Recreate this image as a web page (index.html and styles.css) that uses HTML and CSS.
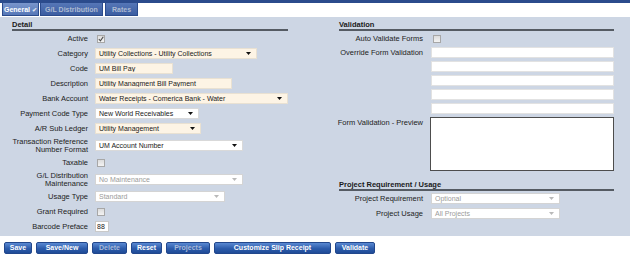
FILE: index.html
```html
<!DOCTYPE html>
<html lang="en">
<head>
    <meta charset="UTF-8">
    <meta name="viewport" content="width=device-width, initial-scale=1.0">
    <title>Payment Code</title>
    <link rel="stylesheet" href="styles.css">
</head>
<body>
    <div class="tabs">
        <a class="tab tab-general active" href="#">General <span class="tick">&#10004;</span></a>
        <a class="tab tab-gl" href="#">G/L Distribution</a>
        <a class="tab tab-rates" href="#">Rates</a>
    </div>

    <div class="panel">
        <section class="col col-left">
            <h2>Detail</h2>
            <div class="row">
                <label>Active</label>
                <span class="cb"><svg width="6" height="6" viewBox="0 0 6 6"><path d="M0.8 3 L2.4 4.8 L5.3 0.8" fill="none" stroke="#4a4a4a" stroke-width="1.1"/></svg></span>
            </div>
            <div class="row">
                <label>Category</label>
                <div class="select cream f-category"><span>Utility Collections - Utility Collections</span><i class="arrow"></i></div>
            </div>
            <div class="row">
                <label>Code</label>
                <input class="input cream f-code" value="UM Bill Pay">
            </div>
            <div class="row">
                <label>Description</label>
                <input class="input cream f-desc" value="Utility Managment Bill Payment">
            </div>
            <div class="row">
                <label>Bank Account</label>
                <div class="select cream f-bank"><span>Water Receipts - Comerica Bank - Water</span><i class="arrow"></i></div>
            </div>
            <div class="row">
                <label>Payment Code Type</label>
                <div class="select f-type"><span>New World Receivables</span><i class="arrow"></i></div>
            </div>
            <div class="row">
                <label>A/R Sub Ledger</label>
                <div class="select cream f-ledger"><span>Utility Management</span><i class="arrow"></i></div>
            </div>
            <div class="row tall">
                <label>Transaction Reference Number Format</label>
                <div class="select f-wide"><span>UM Account Number</span><i class="arrow"></i></div>
            </div>
            <div class="row">
                <label>Taxable</label>
                <span class="cb"></span>
            </div>
            <div class="row tall">
                <label>G/L Distribution Maintenance</label>
                <div class="select disabled f-wide"><span>No Maintenance</span><i class="arrow"></i></div>
            </div>
            <div class="row">
                <label>Usage Type</label>
                <div class="select disabled f-usage"><span>Standard</span><i class="arrow"></i></div>
            </div>
            <div class="row">
                <label>Grant Required</label>
                <span class="cb"></span>
            </div>
            <div class="row">
                <label>Barcode Preface</label>
                <input class="input f-barcode" value="88">
            </div>
        </section>

        <section class="col col-right">
            <h2>Validation</h2>
            <div class="row">
                <label>Auto Validate Forms</label>
                <span class="cb"></span>
            </div>
            <div class="row top override">
                <label>Override Form Validation</label>
                <div class="stack">
                    <input class="input f-long">
                    <input class="input f-long">
                    <input class="input f-long">
                    <input class="input f-long">
                    <input class="input f-long">
                </div>
            </div>
            <div class="row top preview">
                <label>Form Validation - Preview</label>
                <textarea class="preview-box"></textarea>
            </div>

            <h2 class="sub">Project Requirement / Usage</h2>
            <div class="row">
                <label>Project Requirement</label>
                <div class="select disabled f-project"><span>Optional</span><i class="arrow"></i></div>
            </div>
            <div class="row">
                <label>Project Usage</label>
                <div class="select disabled f-project"><span>All Projects</span><i class="arrow"></i></div>
            </div>
        </section>
    </div>

    <div class="buttons">
        <button class="btn b-save">Save</button>
        <button class="btn b-savenew">Save/New</button>
        <button class="btn b-delete off">Delete</button>
        <button class="btn b-reset">Reset</button>
        <button class="btn b-projects off">Projects</button>
        <button class="btn b-slip">Customize Slip Receipt</button>
        <button class="btn b-validate">Validate</button>
    </div>
</body>
</html>
```

FILE: styles.css
```css
body {
    margin: 0;
    font-family: "Liberation Sans", Arial, sans-serif;
    background: #ffffff;
    color: #1e1e1e;
}

/* tabs */
.tabs {
    display: flex;
    height: 14px;
    padding-left: 2px;
    border-top: 3px solid #2b4b8c;
}
.tab {
    box-sizing: border-box;
    height: 13px;
    line-height: 13px;
    margin-right: 1px;
    text-align: center;
    font-size: 7px;
    font-weight: bold;
    color: #aebbd2;
    text-decoration: none;
    background: linear-gradient(#5677b7, #3b5da1);
    border: 1px solid #2b4b8c;
    border-top: 0;
}
.tab.active {
    color: #ffffff;
    background: linear-gradient(#7995cc, #5677b7);
}
.tab .tick {
    font-size: 6px;
    color: #dfe6f3;
}
.tab-general { width: 37px; }
.tab-gl { width: 63px; }
.tab-rates { width: 33px; margin-left: 1px; }

/* main panel */
.panel {
    display: grid;
    grid-template-columns: 278px 277px;
    column-gap: 49px;
    height: 219px;
    padding: 0 16px 0 10px;
    background: #cdd6e4;
}
h2 {
    margin: 0 0 0 2px;
    padding-top: 3px;
    line-height: 9px;
    font-size: 7.5px;
    font-weight: bold;
    color: #1a1a1a;
    border-bottom: 2px solid #555b63;
}
h2.sub {
    margin-top: 6px;
}

.row {
    display: grid;
    align-items: center;
    height: 15px;
}
.col-left .row {
    grid-template-columns: 78px 1fr;
    column-gap: 7px;
}
.col-right .row {
    grid-template-columns: 86px 1fr;
    column-gap: 8px;
}
.row.tall {
    height: 19px;
}
.row.top {
    align-items: start;
    height: auto;
}
.row label {
    justify-self: end;
    text-align: right;
    font-size: 7.5px;
    line-height: 8px;
    color: #222222;
    white-space: nowrap;
}
.row.tall label {
    white-space: normal;
}
.row.top label {
    line-height: 11px;
}
.override {
    margin-top: 1px;
}
.preview {
    margin-top: 3px;
}

/* fields */
.input,
.select {
    box-sizing: border-box;
    height: 11px;
    margin: 0;
    padding: 0 3px;
    font-family: inherit;
    font-size: 7px;
    line-height: 9px;
    color: #1a1a1a;
    background: #ffffff;
    border: 1px solid #d9d9d9;
    outline: none;
}
.cream {
    background: #fdf4e5;
    border-color: #e9e1d2;
}
.select {
    display: flex;
    align-items: center;
    justify-content: space-between;
    padding-right: 5px;
    white-space: nowrap;
    overflow: hidden;
}
.arrow {
    display: block;
    width: 5px;
    height: 3px;
    background: #111111;
    clip-path: polygon(0 0, 100% 0, 50% 100%);
}
.select.disabled {
    color: #9b9b9b;
    border-color: #d4d4d4;
}
.select.disabled .arrow {
    background: #b9b9b9;
}

.f-category { width: 162px; }
.f-code { width: 78px; }
.f-desc { width: 137px; }
.f-bank { width: 193px; }
.f-type { width: 104px; }
.f-ledger { width: 106px; }
.f-wide { width: 148px; }
.f-usage { width: 130px; }
.f-barcode { width: 14px; padding: 0 1px; border-color: #c9c9c9; }
.f-long { width: 183px; border-color: #e2e2e2; }
.f-project { width: 129px; }

.cb {
    box-sizing: border-box;
    display: flex;
    align-items: center;
    justify-content: center;
    width: 8px;
    height: 8px;
    margin-left: 2px;
    background: linear-gradient(#dcdcdc, #f3f3f3);
    border: 1px solid #a7a7a7;
}

.stack {
    display: flex;
    flex-direction: column;
    gap: 3px;
}
.preview-box {
    box-sizing: border-box;
    display: block;
    width: 184px;
    height: 54px;
    margin: 0 0 0 -1px;
    padding: 0;
    resize: none;
    background: #ffffff;
    border: 1px solid #4d4d4d;
}

/* buttons */
.buttons {
    display: flex;
    gap: 4px;
    padding: 6px 0 0 4px;
}
.btn {
    box-sizing: border-box;
    height: 12px;
    padding: 0;
    font-family: inherit;
    font-size: 7px;
    font-weight: bold;
    line-height: 10px;
    color: #ffffff;
    background: linear-gradient(#5a89d2, #2d5cab 55%, #1f4b97);
    border: 1px solid #22478c;
    border-radius: 2px;
}
.btn.off {
    color: #a8b9d8;
}
.b-save { width: 28px; }
.b-savenew { width: 52px; }
.b-delete { width: 35px; }
.b-reset { width: 31px; }
.b-projects { width: 44px; }
.b-slip { width: 117px; }
.b-validate { width: 40px; }
```
